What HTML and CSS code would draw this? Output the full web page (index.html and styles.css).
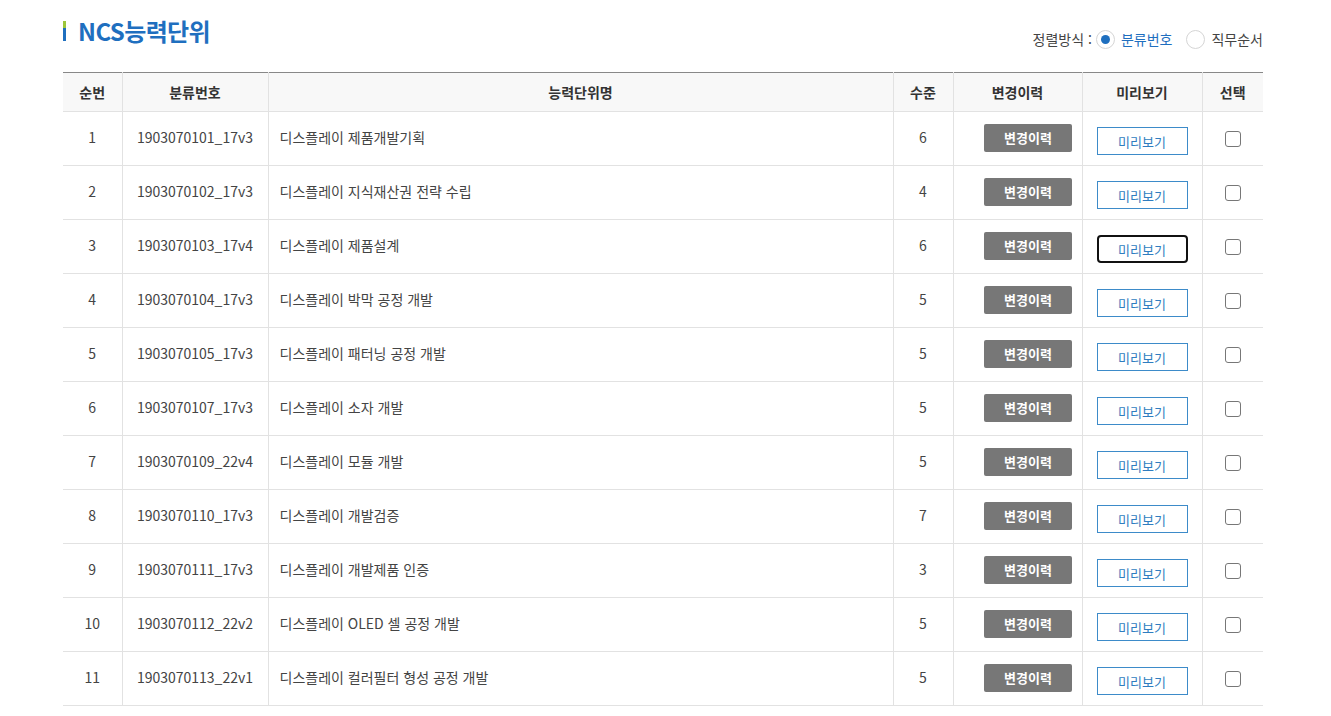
FILE: index.html
```html
<!DOCTYPE html>
<html lang="ko">
<head>
<meta charset="utf-8">
<title>NCS능력단위</title>
<link rel="stylesheet" href="styles.css">
</head>
<body>
<div class="wrap">
  <div class="head">
    <h2 class="title"><span class="bar"></span>NCS능력단위</h2>
    <div class="sort">
      <span class="sort-label">정렬방식 :</span>
      <label class="radio on"><span class="circle"></span>분류번호</label>
      <label class="radio"><span class="circle"></span>직무순서</label>
    </div>
  </div>
  <table class="tbl">
    <colgroup>
      <col class="c1"><col class="c2"><col class="c3"><col class="c4"><col class="c5"><col class="c6"><col class="c7">
    </colgroup>
    <thead>
      <tr><th>순번</th><th>분류번호</th><th>능력단위명</th><th>수준</th><th>변경이력</th><th>미리보기</th><th>선택</th></tr>
    </thead>
    <tbody>
      <tr><td>1</td><td>1903070101_17v3</td><td class="name">디스플레이 제품개발기획</td><td>6</td><td><span class="btn-hist">변경이력</span></td><td><span class="btn-prev">미리보기</span></td><td><span class="chk"></span></td></tr>
      <tr><td>2</td><td>1903070102_17v3</td><td class="name">디스플레이 지식재산권 전략 수립</td><td>4</td><td><span class="btn-hist">변경이력</span></td><td><span class="btn-prev">미리보기</span></td><td><span class="chk"></span></td></tr>
      <tr><td>3</td><td>1903070103_17v4</td><td class="name">디스플레이 제품설계</td><td>6</td><td><span class="btn-hist">변경이력</span></td><td><span class="btn-prev focus">미리보기</span></td><td><span class="chk"></span></td></tr>
      <tr><td>4</td><td>1903070104_17v3</td><td class="name">디스플레이 박막 공정 개발</td><td>5</td><td><span class="btn-hist">변경이력</span></td><td><span class="btn-prev">미리보기</span></td><td><span class="chk"></span></td></tr>
      <tr><td>5</td><td>1903070105_17v3</td><td class="name">디스플레이 패터닝 공정 개발</td><td>5</td><td><span class="btn-hist">변경이력</span></td><td><span class="btn-prev">미리보기</span></td><td><span class="chk"></span></td></tr>
      <tr><td>6</td><td>1903070107_17v3</td><td class="name">디스플레이 소자 개발</td><td>5</td><td><span class="btn-hist">변경이력</span></td><td><span class="btn-prev">미리보기</span></td><td><span class="chk"></span></td></tr>
      <tr><td>7</td><td>1903070109_22v4</td><td class="name">디스플레이 모듈 개발</td><td>5</td><td><span class="btn-hist">변경이력</span></td><td><span class="btn-prev">미리보기</span></td><td><span class="chk"></span></td></tr>
      <tr><td>8</td><td>1903070110_17v3</td><td class="name">디스플레이 개발검증</td><td>7</td><td><span class="btn-hist">변경이력</span></td><td><span class="btn-prev">미리보기</span></td><td><span class="chk"></span></td></tr>
      <tr><td>9</td><td>1903070111_17v3</td><td class="name">디스플레이 개발제품 인증</td><td>3</td><td><span class="btn-hist">변경이력</span></td><td><span class="btn-prev">미리보기</span></td><td><span class="chk"></span></td></tr>
      <tr><td>10</td><td>1903070112_22v2</td><td class="name">디스플레이 OLED 셀 공정 개발</td><td>5</td><td><span class="btn-hist">변경이력</span></td><td><span class="btn-prev">미리보기</span></td><td><span class="chk"></span></td></tr>
      <tr><td>11</td><td>1903070113_22v1</td><td class="name">디스플레이 컬러필터 형성 공정 개발</td><td>5</td><td><span class="btn-hist">변경이력</span></td><td><span class="btn-prev">미리보기</span></td><td><span class="chk"></span></td></tr>
    </tbody>
  </table>
</div>
</body>
</html>
```

FILE: styles.css
```css
* { box-sizing: border-box; }
html, body { margin: 0; padding: 0; background: #fff; }
body {
  font-family: "Noto Sans CJK KR", "Noto Sans", sans-serif;
  color: #444;
  font-size: 14px;
}
.wrap {
  width: 1200px;
  margin-left: 63px;
  padding-top: 14px;
}
.head {
  display: flex;
  justify-content: space-between;
  align-items: flex-start;
  height: 58px;
}
.title {
  margin: 0;
  display: flex;
  align-items: center;
  font-size: 24px;
  font-weight: 700;
  color: #1f6fbf;
  letter-spacing: -0.6px;
  line-height: 34px;
}
.bar {
  display: inline-block;
  width: 3px;
  height: 20px;
  margin-right: 12px;
  background: linear-gradient(#9cc63b 0 35%, #1f6fbf 35% 100%);
}
.sort {
  display: flex;
  align-items: center;
  margin-top: 15px;
  font-size: 14px;
  color: #444;
}
.sort-label { margin-right: 4px; }
.radio {
  display: flex;
  align-items: center;
}
.radio + .radio { margin-left: 14px; }
.radio .circle {
  width: 19px;
  height: 19px;
  border: 1px solid #d5d5d5;
  border-radius: 50%;
  margin-right: 6px;
  position: relative;
  background: #fff;
}
.radio.on { color: #1f6fbf; }
.radio.on .circle::after {
  content: "";
  position: absolute;
  left: 4px;
  top: 4px;
  width: 9px;
  height: 9px;
  border-radius: 50%;
  background: #1f6fbf;
}
.tbl {
  width: 1200px;
  border-collapse: collapse;
  table-layout: fixed;
  border-top: 1px solid #888;
}
.c1 { width: 59px; }
.c2 { width: 146px; }
.c3 { width: 625px; }
.c4 { width: 60px; }
.c5 { width: 129px; }
.c6 { width: 120px; }
.c7 { width: 61px; }
.tbl th {
  height: 39px;
  background: #f8f8f8;
  font-weight: 700;
  color: #333;
  font-size: 14px;
  border-bottom: 1px solid #e2e2e2;
  border-left: 1px solid #e2e2e2;
  padding: 0 0 1px;
}
.tbl td {
  height: 54px;
  text-align: center;
  border-bottom: 1px solid #e2e2e2;
  border-left: 1px solid #e2e2e2;
  padding: 0 0 3px;
  color: #444;
  font-size: 14px;
}
.tbl th:first-child, .tbl td:first-child { border-left: none; }
.tbl td.name { text-align: left; padding-left: 11px; }
.btn-hist {
  display: inline-block;
  width: 88px;
  height: 28px;
  line-height: 27px;
  background: #777;
  color: #fff;
  font-weight: 700;
  font-size: 13px;
  border-radius: 2px;
  margin-top: 1px;
  margin-left: 21px;
  vertical-align: middle;
}
.btn-prev {
  display: inline-block;
  width: 91px;
  height: 28px;
  line-height: 28px;
  border: 1px solid #3d8bc9;
  color: #2f7dc0;
  font-size: 13px;
  vertical-align: middle;
  margin-top: 7px;
}
.btn-prev.focus {
  border: 2px solid #111;
  border-radius: 4px;
  line-height: 26px;
}
.chk {
  display: inline-block;
  width: 16px;
  height: 16px;
  border: 1px solid #777;
  border-radius: 3px;
  vertical-align: middle;
}
```
